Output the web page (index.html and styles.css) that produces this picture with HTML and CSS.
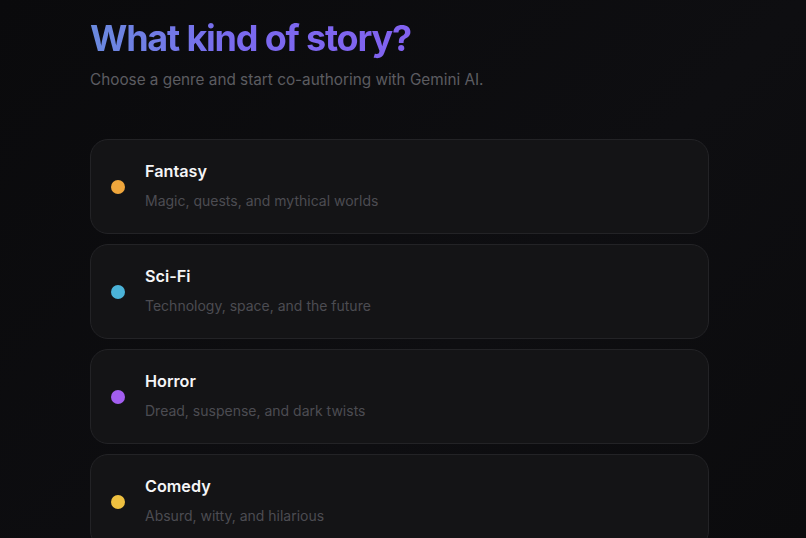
FILE: index.html
```html
<!DOCTYPE html>
<html lang="en">
<head>
<meta charset="utf-8">
<title>What kind of story?</title>
<link rel="stylesheet" href="styles.css">
</head>
<body>
<main class="page">
  <header class="intro">
    <h1 class="title">What kind of story?</h1>
    <p class="subtitle">Choose a genre and start co-authoring with Gemini AI.</p>
  </header>
  <ul class="genres">
    <li class="genre">
      <span class="dot dot-fantasy"></span>
      <div class="genre-text">
        <h2 class="genre-name">Fantasy</h2>
        <p class="genre-desc">Magic, quests, and mythical worlds</p>
      </div>
    </li>
    <li class="genre">
      <span class="dot dot-scifi"></span>
      <div class="genre-text">
        <h2 class="genre-name">Sci-Fi</h2>
        <p class="genre-desc">Technology, space, and the future</p>
      </div>
    </li>
    <li class="genre">
      <span class="dot dot-horror"></span>
      <div class="genre-text">
        <h2 class="genre-name">Horror</h2>
        <p class="genre-desc">Dread, suspense, and dark twists</p>
      </div>
    </li>
    <li class="genre">
      <span class="dot dot-comedy"></span>
      <div class="genre-text">
        <h2 class="genre-name">Comedy</h2>
        <p class="genre-desc">Absurd, witty, and hilarious</p>
      </div>
    </li>
  </ul>
</main>
</body>
</html>
```

FILE: styles.css
```css
* { box-sizing: border-box; }

html, body {
  margin: 0;
  height: 100%;
}

body {
  background: linear-gradient(135deg, #0a0a0c 0%, #0e0e11 60%, #0b0b0d 100%);
  font-family: "Inter", "Noto Sans", sans-serif;
  color: #ffffff;
  overflow: hidden;
}

.page {
  width: 619px;
  margin-left: 90px;
  padding-top: 16px;
}

.intro {
  display: flex;
  flex-direction: column;
}

.title {
  margin: 0;
  font-size: 36px;
  font-weight: 700;
  line-height: 44px;
  letter-spacing: -1.2px;
  background: linear-gradient(90deg, #6a8ade 0%, #7a6aee 45%, #8262f0 100%);
  -webkit-background-clip: text;
  background-clip: text;
  color: transparent;
  width: max-content;
}

.subtitle {
  margin: 8px 0 0;
  font-size: 15.3px;
  line-height: 24px;
  color: #5c5c61;
}

.genres {
  list-style: none;
  margin: 47px 0 0;
  padding: 0;
  display: flex;
  flex-direction: column;
  gap: 10px;
}

.genre {
  display: flex;
  align-items: center;
  gap: 20px;
  height: 95px;
  padding: 0 20px;
  background: #141416;
  border: 1px solid #232326;
  border-radius: 18px;
}

.dot {
  flex: none;
  width: 14px;
  height: 14px;
  border-radius: 50%;
}
.dot-fantasy { background: #efa63c; }
.dot-scifi { background: #4bb3d8; }
.dot-horror { background: #a35ef0; }
.dot-comedy { background: #eec040; }

.genre-text {
  display: flex;
  flex-direction: column;
  gap: 9px;
  margin-top: -2px;
}

.genre-name {
  margin: 0;
  font-size: 16.2px;
  font-weight: 600;
  line-height: 22px;
  color: #f5f5f7;
}

.genre-desc {
  margin: 0;
  font-size: 14px;
  line-height: 20px;
  color: #4c4c52;
}
```
